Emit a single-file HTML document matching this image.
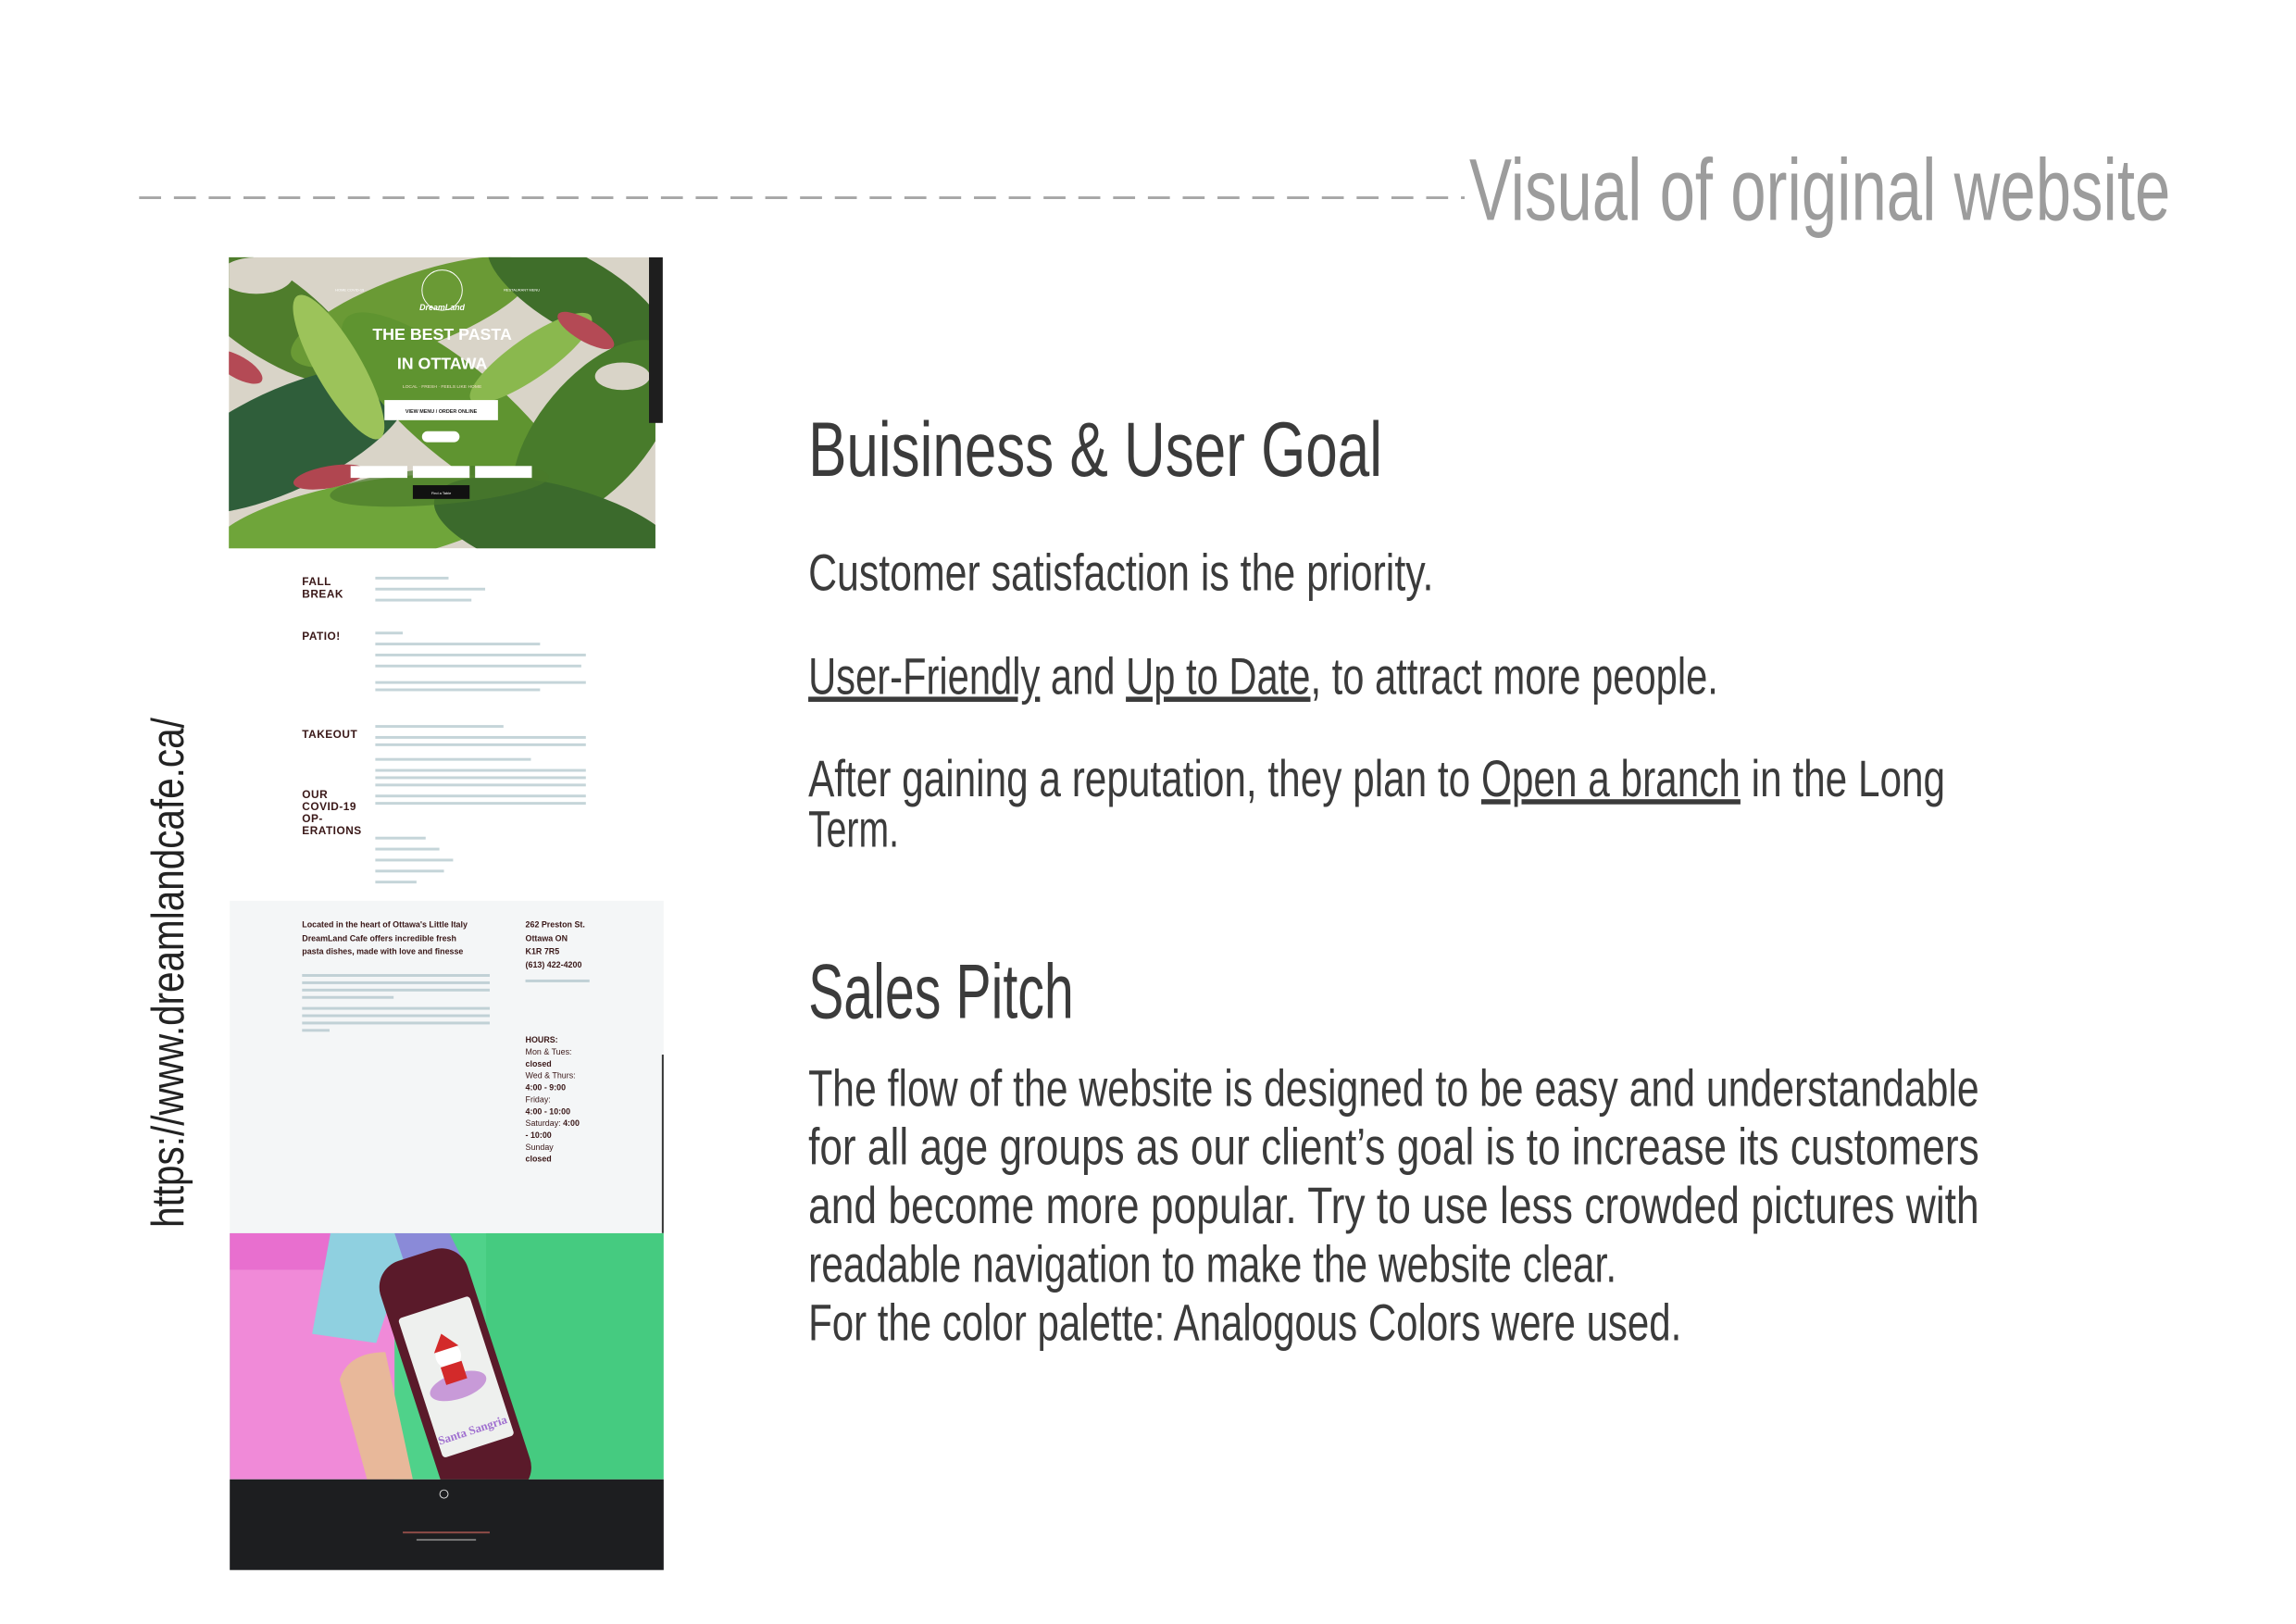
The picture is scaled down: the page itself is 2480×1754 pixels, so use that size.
<!DOCTYPE html>
<html><head><meta charset="utf-8"><style>
html,body{margin:0;padding:0;background:#fff;}
body{width:2480px;height:1754px;position:relative;overflow:hidden;font-family:"Liberation Sans",sans-serif;}
#w{position:absolute;left:0;top:0;width:2480px;height:1754px;transform:scale(0.98875);transform-origin:0 0;}
.abs{position:absolute;}
.lbl{position:absolute;left:330px;font:bold 12px/14px "Liberation Sans",sans-serif;color:#3a1818;letter-spacing:0.5px;}
.ln{position:absolute;height:3px;background:#9fb9c0;opacity:.6;}
.it{position:absolute;font:bold 9px/14.5px "Liberation Sans",sans-serif;color:#3a1818;}
</style></head><body><div id="w">

<svg class="abs" style="left:0;top:0" width="2480" height="1754">
  <line x1="152" y1="216" x2="1600" y2="216" stroke="#a6a6a6" stroke-width="3" stroke-dasharray="24,14"/>
  <text x="1605" y="240" font-family="Liberation Sans" font-size="96" fill="#9c9c9c" textLength="766" lengthAdjust="spacingAndGlyphs">Visual of original website</text>
  <g font-family="Liberation Sans" fill="#3b3b3b">
    <text x="883" y="520" font-size="84" textLength="627" lengthAdjust="spacingAndGlyphs">Buisiness &amp; User Goal</text>
    <text x="883" y="645" font-size="56" textLength="683" lengthAdjust="spacingAndGlyphs">Customer satisfaction is the priority.</text>
    <text x="883" y="758" font-size="56" textLength="994" lengthAdjust="spacingAndGlyphs"><tspan text-decoration="underline">User-Friendly</tspan> and <tspan text-decoration="underline">Up to Date</tspan>, to attract more people.</text>
    <text x="883" y="870" font-size="56" textLength="1242" lengthAdjust="spacingAndGlyphs">After gaining a reputation, they plan to <tspan text-decoration="underline">Open a branch</tspan> in the Long</text>
    <text x="883" y="925" font-size="56" textLength="99" lengthAdjust="spacingAndGlyphs">Term.</text>
    <text x="883" y="1112" font-size="84" textLength="290" lengthAdjust="spacingAndGlyphs">Sales Pitch</text>
    <text x="883" y="1208" font-size="56" textLength="1279" lengthAdjust="spacingAndGlyphs">The flow of the website is designed to be easy and understandable</text>
    <text x="883" y="1272" font-size="56" textLength="1279" lengthAdjust="spacingAndGlyphs">for all age groups as our client’s goal is to increase its customers</text>
    <text x="883" y="1336" font-size="56" textLength="1279" lengthAdjust="spacingAndGlyphs">and become more popular. Try to use less crowded pictures with</text>
    <text x="883" y="1400" font-size="56" textLength="883" lengthAdjust="spacingAndGlyphs">readable navigation to make the website clear.</text>
    <text x="883" y="1464" font-size="56" textLength="954" lengthAdjust="spacingAndGlyphs">For the color palette: Analogous Colors were used.</text>
  </g>
  <text transform="translate(200,1341) rotate(-90)" font-family="Liberation Sans" font-size="50" fill="#222" textLength="557" lengthAdjust="spacingAndGlyphs">https://www.dreamlandcafe.ca/</text>
</svg>

<svg class="abs" style="left:250px;top:281px" width="475" height="320" viewBox="0 0 475 320">
  <defs><clipPath id="c"><rect width="466" height="318"/></clipPath></defs>
  <g clip-path="url(#c)">
  <rect width="466" height="318" fill="#d9d4c8"/>
  <g>
    <ellipse cx="40" cy="60" rx="120" ry="45" transform="rotate(35 40 60)" fill="#4f7d2c"/>
    <ellipse cx="200" cy="60" rx="140" ry="40" transform="rotate(-20 200 60)" fill="#6a9a35"/>
    <ellipse cx="380" cy="40" rx="110" ry="40" transform="rotate(30 380 40)" fill="#3f6e2a"/>
    <ellipse cx="60" cy="200" rx="150" ry="55" transform="rotate(-25 60 200)" fill="#2f5e3a"/>
    <ellipse cx="250" cy="170" rx="160" ry="50" transform="rotate(40 250 170)" fill="#5f9430"/>
    <ellipse cx="400" cy="190" rx="120" ry="60" transform="rotate(-50 400 190)" fill="#487b2b"/>
    <ellipse cx="150" cy="290" rx="170" ry="45" transform="rotate(-10 150 290)" fill="#6fa53a"/>
    <ellipse cx="360" cy="300" rx="140" ry="50" transform="rotate(15 360 300)" fill="#3b6a2c"/>
    <ellipse cx="120" cy="120" rx="90" ry="25" transform="rotate(60 120 120)" fill="#9cc35a"/>
    <ellipse cx="330" cy="110" rx="80" ry="22" transform="rotate(-35 330 110)" fill="#8ab84e"/>
    <ellipse cx="390" cy="80" rx="35" ry="12" transform="rotate(30 390 80)" fill="#b44a55"/>
    <ellipse cx="10" cy="120" rx="30" ry="12" transform="rotate(30 10 120)" fill="#b44a55"/>
    <ellipse cx="110" cy="240" rx="40" ry="12" transform="rotate(-10 110 240)" fill="#b04650"/>
    <ellipse cx="230" cy="250" rx="120" ry="20" transform="rotate(-5 230 250)" fill="#4a7a2b" opacity=".7"/>
    <ellipse cx="30" cy="20" rx="40" ry="20" fill="#d9d4c8"/>
    <ellipse cx="430" cy="130" rx="30" ry="15" fill="#d9d4c8"/>
  </g>
  <g font-family="Liberation Sans" fill="#fff" text-anchor="middle">
    <text x="233" y="58" font-size="9" font-weight="bold" font-style="italic">DreamLand</text>
    <circle cx="233" cy="36" r="22" fill="none" stroke="#fff" stroke-width="1"/>
    <text x="132" y="37" font-size="4">HOME  COVID-19</text>
    <text x="320" y="37" font-size="4">RESTAURANT  MENU</text>
    <text x="233" y="90" font-size="18" font-weight="bold">THE BEST PASTA</text>
    <text x="233" y="122" font-size="18" font-weight="bold">IN OTTAWA</text>
    <text x="233" y="143" font-size="5" fill="#f3e0c8">LOCAL · FRESH · FEELS LIKE HOME</text>
  </g>
  <rect x="170" y="156" width="124" height="22" fill="#fff"/>
  <text x="232" y="170" font-family="Liberation Sans" font-size="5.5" font-weight="bold" text-anchor="middle" fill="#222">VIEW MENU / ORDER ONLINE</text>
  <rect x="211" y="190" width="41" height="12" rx="6" fill="#fff"/>
  <rect x="133" y="228" width="62" height="13" fill="#fff"/>
  <rect x="201" y="228" width="62" height="13" fill="#fff"/>
  <rect x="269" y="228" width="62" height="13" fill="#fff"/>
  <rect x="201" y="249" width="62" height="15" fill="#111"/>
  <text x="232" y="259" font-family="Liberation Sans" font-size="4" text-anchor="middle" fill="#fff">Find a Table</text>
  </g>
  <rect x="459" y="0" width="15" height="181" fill="#1e1e1e"/>
</svg>

<div class="lbl" style="top:628px">FALL<br>BREAK</div>
<div class="lbl" style="top:688px">PATIO!</div>
<div class="lbl" style="top:795px">TAKEOUT</div>
<div class="lbl" style="top:862px;line-height:13px">OUR<br>COVID-19<br>OP-<br>ERATIONS</div>
<div class="ln" style="left:410px;top:630px;width:80px"></div>
<div class="ln" style="left:410px;top:642px;width:120px"></div>
<div class="ln" style="left:410px;top:654px;width:105px"></div>
<div class="ln" style="left:410px;top:690px;width:30px"></div>
<div class="ln" style="left:410px;top:702px;width:180px"></div>
<div class="ln" style="left:410px;top:714px;width:230px"></div>
<div class="ln" style="left:410px;top:726px;width:225px"></div>
<div class="ln" style="left:410px;top:744px;width:230px"></div>
<div class="ln" style="left:410px;top:752px;width:180px"></div>
<div class="ln" style="left:410px;top:792px;width:140px"></div>
<div class="ln" style="left:410px;top:804px;width:230px"></div>
<div class="ln" style="left:410px;top:812px;width:230px"></div>
<div class="ln" style="left:410px;top:828px;width:170px"></div>
<div class="ln" style="left:410px;top:840px;width:230px"></div>
<div class="ln" style="left:410px;top:848px;width:230px"></div>
<div class="ln" style="left:410px;top:856px;width:230px"></div>
<div class="ln" style="left:410px;top:868px;width:230px"></div>
<div class="ln" style="left:410px;top:876px;width:230px"></div>
<div class="ln" style="left:410px;top:914px;width:55px"></div>
<div class="ln" style="left:410px;top:926px;width:70px"></div>
<div class="ln" style="left:410px;top:938px;width:85px"></div>
<div class="ln" style="left:410px;top:950px;width:75px"></div>
<div class="ln" style="left:410px;top:962px;width:45px"></div>

<div class="abs" style="left:251px;top:984px;width:474px;height:363px;background:#f4f6f7"></div>
<div class="abs" style="left:723px;top:1152px;width:2px;height:195px;background:#333"></div>
<div class="it" style="left:330px;top:1003px">Located in the heart of Ottawa's Little Italy<br>DreamLand Cafe offers incredible fresh<br>pasta dishes, made with love and finesse</div>
<div class="ln" style="left:330px;top:1064px;width:205px"></div>
<div class="ln" style="left:330px;top:1072px;width:205px"></div>
<div class="ln" style="left:330px;top:1080px;width:205px"></div>
<div class="ln" style="left:330px;top:1088px;width:100px"></div>
<div class="ln" style="left:330px;top:1100px;width:205px"></div>
<div class="ln" style="left:330px;top:1108px;width:205px"></div>
<div class="ln" style="left:330px;top:1116px;width:205px"></div>
<div class="ln" style="left:330px;top:1124px;width:30px"></div>
<div class="it" style="left:574px;top:1003px">262 Preston St.<br>Ottawa ON<br>K1R 7R5<br>(613) 422-4200</div>
<div class="ln" style="left:574px;top:1070px;width:70px"></div>
<div class="it" style="left:574px;top:1130px;line-height:13px">HOURS:<br><span style="font-weight:normal">Mon &amp; Tues:</span><br>closed<br><span style="font-weight:normal">Wed &amp; Thurs:</span><br>4:00 - 9:00<br><span style="font-weight:normal">Friday:</span><br>4:00 - 10:00<br><span style="font-weight:normal">Saturday:</span> 4:00<br>- 10:00<br><span style="font-weight:normal">Sunday</span><br>closed</div>

<svg class="abs" style="left:251px;top:1347px" width="474" height="269" viewBox="0 0 474 269">
  <rect width="474" height="269" fill="#4fd28a"/>
  <rect width="180" height="269" fill="#f08ad8"/>
  <rect x="0" y="0" width="120" height="40" fill="#e86fcf"/>
  <path d="M110 0 L200 0 L160 120 L90 110 Z" fill="#8fd0e0"/>
  <path d="M180 0 L240 0 L260 40 L200 60 Z" fill="#8a8ad8"/>
  <rect x="280" y="0" width="194" height="269" fill="#3fc77a" opacity=".6"/>
  <path d="M150 269 L120 160 Q130 130 170 130 L200 269 Z" fill="#e8b89a"/>
  <g transform="rotate(-18 240 170)">
    <rect x="200" y="20" width="100" height="280" rx="30" fill="#5a1a2a"/>
    <rect x="210" y="80" width="82" height="160" rx="4" fill="#eef0ee"/>
    <ellipse cx="250" cy="170" rx="32" ry="14" fill="#c89ad8"/>
    <circle cx="250" cy="135" r="14" fill="#fff"/>
    <path d="M236 128 L250 110 L264 128 Z" fill="#d32a2a"/>
    <rect x="238" y="145" width="24" height="20" fill="#d32a2a"/>
    <text x="250" y="225" font-family="Liberation Serif" font-size="13" font-weight="bold" fill="#a070d0" text-anchor="middle">Santa Sangria</text>
  </g>
</svg>

<div class="abs" style="left:251px;top:1616px;width:474px;height:99px;background:#1d1e20"></div>
<div class="abs" style="left:480px;top:1627px;width:8px;height:8px;border:1.5px solid #ddd;border-radius:50%"></div>
<div class="abs" style="left:440px;top:1673px;width:95px;height:2px;background:#c0605a;opacity:.7"></div>
<div class="abs" style="left:455px;top:1681px;width:65px;height:2px;background:#777"></div>

</div></body></html>
